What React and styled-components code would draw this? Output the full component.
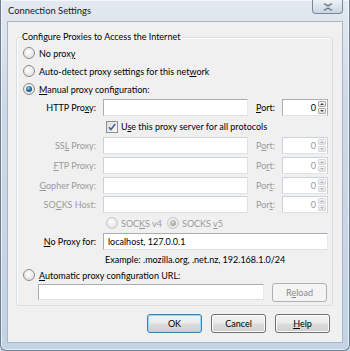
import styled, { createGlobalStyle } from 'styled-components';

const Global = createGlobalStyle`
  html, body {
    margin: 0;
    padding: 0;
    background: #c9d7e6;
  }
  body {
    font-family: Lato, "Open Sans", sans-serif;
    font-size: 9px;
    color: #000;
  }
`;

const Window = styled.div`
  width: 350px;
  height: 351px;
  box-sizing: border-box;
  display: flex;
  flex-direction: column;
  border: 1px solid #6e7e90;
  border-top: none;
  border-radius: 0 0 6px 6px;
  background: linear-gradient(180deg, #e3e9f0 0%, #cdd9e6 30%, #c3d3e4 100%);
  box-shadow: inset 0 0 0 1px rgba(255, 255, 255, 0.6);
`;

const TitleBar = styled.div`
  height: 21px;
  display: flex;
  justify-content: space-between;
  align-items: flex-start;
  padding-left: 7px;
  padding-right: 6px;
`;

const Title = styled.span`
  font-size: 9.4px;
  line-height: 21px;
  color: #1a1a1a;
`;

const Close = styled.div`
  width: 31px;
  height: 14px;
  box-sizing: border-box;
  border: 1px solid #7c8898;
  border-top: none;
  border-radius: 0 0 4px 4px;
  background: linear-gradient(180deg, #eef2f6 0%, #dbe3ec 50%, #cbd6e2 100%);
  display: flex;
  align-items: center;
  justify-content: center;
`;

const Client = styled.div`
  flex: 1;
  margin: 0 6px 7px 6px;
  background: #f0f0f0;
  border: 1px solid #a7b6c8;
  display: flex;
  flex-direction: column;
`;

const Group = styled.fieldset`
  margin: 8px 9px 0 8px;
  padding: 0 4px 3px 6px;
  border: 1px solid #d5dfe5;
  border-radius: 3px;
  box-shadow: inset 1px 1px 0 #fff;
  min-width: 0;
`;

const Legend = styled.legend`
  padding: 0 2px 0 0;
  margin-left: -1px;
  line-height: 14px;
  height: 14px;
`;

const Row = styled.div`
  height: ${(p) => p.$h}px;
  display: flex;
  align-items: center;
  gap: ${(p) => p.$gap || 0}px;
  padding-left: ${(p) => p.$indent || 0}px;
  color: ${(p) => (p.$disabled ? '#9a9a9a' : '#000')};
  white-space: nowrap;
`;

const Option = styled.label`
  display: flex;
  align-items: center;
  gap: ${(p) => (p.$gap == null ? 4 : p.$gap)}px;
  width: ${(p) => (p.$w ? `${p.$w}px` : 'auto')};
  color: ${(p) => (p.$disabled ? '#9a9a9a' : '#000')};
`;

const Radio = styled.span`
  width: 12px;
  height: 12px;
  flex: none;
  box-sizing: border-box;
  border-radius: 50%;
  border: 1px solid ${(p) => (p.$disabled ? '#c8c8c8' : '#8c8c8c')};
  background: radial-gradient(circle at 45% 40%, #ffffff 0%, #eeeeee 45%, #d4d4d4 100%);
  display: flex;
  align-items: center;
  justify-content: center;

  &::after {
    content: '';
    display: ${(p) => (p.$checked ? 'block' : 'none')};
    width: 6px;
    height: 6px;
    border-radius: 50%;
    background: ${(p) =>
      p.$disabled
        ? 'radial-gradient(circle at 40% 35%, #d8d8d8 0%, #9c9c9c 80%)'
        : 'radial-gradient(circle at 40% 35%, #9fd6f0 0%, #2c6ea0 45%, #0f2f5c 100%)'};
  }
`;

const CheckBox = styled.span`
  width: 12px;
  height: 12px;
  flex: none;
  box-sizing: border-box;
  border: 1px solid #8e8f8f;
  background: linear-gradient(135deg, #dcdcdc 0%, #fbfbfb 100%);
  display: flex;
  align-items: center;
  justify-content: center;
`;

const Label = styled.span`
  width: 73px;
  flex: none;
  text-align: right;
  margin-right: 7px;
  color: ${(p) => (p.$disabled ? '#9a9a9a' : '#000')};
`;

const PortLabel = styled.span`
  width: 26px;
  flex: none;
  margin-left: 8px;
  color: ${(p) => (p.$disabled ? '#9a9a9a' : '#000')};
`;

const TextBox = styled.div`
  width: ${(p) => p.$w}px;
  height: ${(p) => p.$h || 17}px;
  flex: none;
  box-sizing: border-box;
  background: #fff;
  border: 1px solid ${(p) => (p.$disabled ? '#ccd2d8' : '#abadb3')};
  border-bottom-color: ${(p) => (p.$disabled ? '#dde2e7' : '#dbdfe6')};
  border-right-color: ${(p) => (p.$disabled ? '#dde2e7' : '#e3e9ef')};
  display: flex;
  align-items: center;
  padding: 0 4px;
  color: #000;
`;

const Spin = styled.div`
  width: 46px;
  height: 17px;
  flex: none;
  box-sizing: border-box;
  background: #fff;
  border: 1px solid ${(p) => (p.$disabled ? '#ccd2d8' : '#abadb3')};
  border-bottom-color: ${(p) => (p.$disabled ? '#dde2e7' : '#dbdfe6')};
  display: flex;
  align-items: stretch;
`;

const SpinValue = styled.span`
  flex: 1;
  text-align: right;
  padding-right: 2px;
  line-height: 15px;
  color: ${(p) => (p.$disabled ? '#9a9a9a' : '#000')};
`;

const SpinButtons = styled.div`
  width: 8px;
  display: flex;
  flex-direction: column;
  padding: 1px 1px 1px 0;
  gap: 1px;
`;

const SpinButton = styled.div`
  flex: 1;
  border: 1px solid ${(p) => (p.$disabled ? '#d6d6d6' : '#a9a9a9')};
  border-radius: 1px;
  background: linear-gradient(180deg, #f6f6f6, #e2e2e2);
  display: flex;
  align-items: center;
  justify-content: center;

  &::after {
    content: '';
    width: 0;
    height: 0;
    border-left: 2px solid transparent;
    border-right: 2px solid transparent;
    ${(p) =>
      p.$down
        ? `border-top: 2px solid ${p.$disabled ? '#b4b4b4' : '#444'};`
        : `border-bottom: 2px solid ${p.$disabled ? '#b4b4b4' : '#444'};`}
  }
`;

const Button = styled.div`
  width: 55px;
  height: 19px;
  box-sizing: border-box;
  flex: none;
  border-radius: 3px;
  display: flex;
  align-items: center;
  justify-content: center;
  border: 1px solid ${(p) => (p.$disabled ? '#adb2b5' : p.$default ? '#3c7fb1' : '#707070')};
  background: ${(p) =>
    p.$disabled
      ? '#f4f4f4'
      : 'linear-gradient(180deg, #f2f2f2 0%, #ebebeb 48%, #dddddd 52%, #cfcfcf 100%)'};
  box-shadow: ${(p) =>
    p.$default ? 'inset 0 0 0 1px #9fd6f3' : p.$disabled ? 'none' : 'inset 0 0 0 1px #fcfcfc'};
  color: ${(p) => (p.$disabled ? '#8a8a8a' : '#000')};
`;

const Buttons = styled.div`
  display: flex;
  justify-content: flex-end;
  gap: 9px;
  margin-top: 8px;
  padding-right: 12px;
`;

const Key = styled.span`
  text-decoration: underline;
  text-underline-offset: 1px;
`;

const Port = ({ disabled, label }) => (
  <>
    <PortLabel $disabled={disabled}>{label}</PortLabel>
    <Spin $disabled={disabled}>
      <SpinValue $disabled={disabled}>0</SpinValue>
      <SpinButtons>
        <SpinButton $disabled={disabled} />
        <SpinButton $disabled={disabled} $down />
      </SpinButtons>
    </Spin>
  </>
);

const ProxyRow = ({ h, label, port, disabled }) => (
  <Row $h={h}>
    <Label $disabled={disabled}>{label}</Label>
    <TextBox $w={145} $disabled={disabled} />
    <Port disabled={disabled} label={port} />
  </Row>
);

const App = () => {
  return (
    <>
      <Global />
      <Window>
        <TitleBar>
          <Title>Connection Settings</Title>
          <Close>
            <svg width="10" height="8" viewBox="0 0 10 8">
              <path
                d="M1 0.5 L5 3.2 L9 0.5 M1 7.5 L5 4.8 L9 7.5"
                stroke="#5a6573"
                strokeWidth="1.6"
                fill="none"
              />
              <path
                d="M1 0.5 L9 7.5 M9 0.5 L1 7.5"
                stroke="#f4f6f8"
                strokeWidth="0.6"
                fill="none"
              />
            </svg>
          </Close>
        </TitleBar>
        <Client>
          <Group>
            <Legend>Configure Proxies to Access the Internet</Legend>
            <Row $h={18}>
              <Option>
                <Radio />
                <span>No prox<Key>y</Key></span>
              </Option>
            </Row>
            <Row $h={18}>
              <Option>
                <Radio />
                <span>Auto-detect proxy settings for this net<Key>w</Key>ork</span>
              </Option>
            </Row>
            <Row $h={18}>
              <Option>
                <Radio $checked />
                <span><Key>M</Key>anual proxy configuration:</span>
              </Option>
            </Row>
            <ProxyRow
              h={19}
              label={<>HTTP Pro<Key>x</Key>y:</>}
              port={<><Key>P</Key>ort:</>}
            />
            <Row $h={19} $indent={83}>
              <Option $gap={3}>
                <CheckBox>
                  <svg width="8" height="8" viewBox="0 0 8 8">
                    <path
                      d="M0.8 4.2 L3 6.6 L7.2 1"
                      stroke="#4a5f97"
                      strokeWidth="1.6"
                      fill="none"
                    />
                  </svg>
                </CheckBox>
                <span>U<Key>s</Key>e this proxy server for all protocols</span>
              </Option>
            </Row>
            <ProxyRow h={19} disabled label={<>SS<Key>L</Key> Proxy:</>} port={<>P<Key>o</Key>rt:</>} />
            <ProxyRow h={20} disabled label={<><Key>F</Key>TP Proxy:</>} port={<>Po<Key>r</Key>t:</>} />
            <ProxyRow h={20} disabled label={<><Key>G</Key>opher Proxy:</>} port={<>Por<Key>t</Key>:</>} />
            <ProxyRow h={19} disabled label={<>SO<Key>C</Key>KS Host:</>} port={<>Por<Key>t</Key>:</>} />
            <Row $h={18} $indent={83}>
              <Option $disabled $w={61} $gap={3}>
                <Radio $disabled />
                <span>SOC<Key>K</Key>S v4</span>
              </Option>
              <Option $disabled $gap={3}>
                <Radio $disabled $checked />
                <span>SOCKS <Key>v</Key>5</span>
              </Option>
            </Row>
            <Row $h={19}>
              <Label><Key>N</Key>o Proxy for:</Label>
              <TextBox $w={225}>localhost, 127.0.0.1</TextBox>
            </Row>
            <Row $h={17} $indent={82}>
              Example: .mozilla.org, .net.nz, 192.168.1.0/24
            </Row>
            <Row $h={14}>
              <Option>
                <Radio />
                <span><Key>A</Key>utomatic proxy configuration URL:</span>
              </Option>
            </Row>
            <Row $h={20} $indent={15} $gap={8}>
              <TextBox $w={226} $h={16} />
              <Button $disabled>
                <span>R<Key>e</Key>load</span>
              </Button>
            </Row>
          </Group>
          <Buttons>
            <Button $default>OK</Button>
            <Button>Cancel</Button>
            <Button><span><Key>H</Key>elp</span></Button>
          </Buttons>
        </Client>
      </Window>
    </>
  );
};

export default App;
